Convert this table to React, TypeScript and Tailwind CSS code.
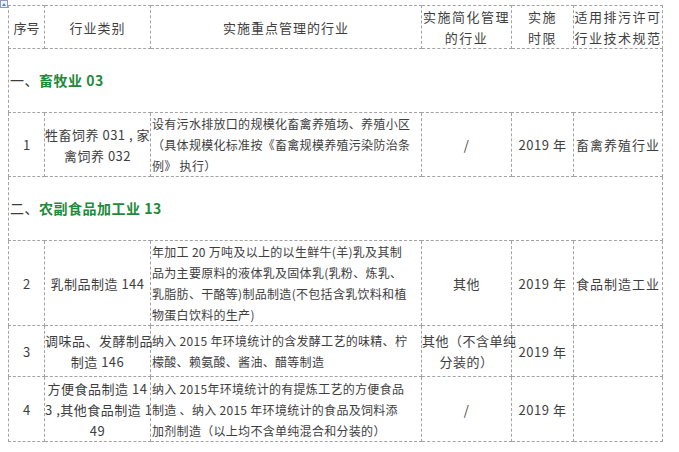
const cell = "border border-dashed border-[#a3a3a3] p-0 align-middle";

const Lines = ({ lines }: { lines: string[] }) => (
  <>
    {lines.map((l, i) => (
      <span key={i} className="block whitespace-nowrap">
        {l}
      </span>
    ))}
  </>
);

const Section = ({ num, title }: { num: string; title: string }) => (
  <tr className="h-[64px]">
    <td colSpan={6} className={`${cell} pl-[1px] text-[14px] tracking-[0.5px]`}>
      <span className="text-[#3e3e3e]">{num}</span>
      <span className="font-bold text-[#1f8a3b]">{title}</span>
    </td>
  </tr>
);

const rows = [
  {
    no: "1",
    cat: ["牲畜饲养 031 , 家", "禽饲养 032"],
    key: ["设有污水排放口的规模化畜禽养殖场、养殖小区", "（具体规模化标准按《畜禽规模养殖污染防治条", "例》 执行）"],
    simple: ["/"],
    year: "2019 年",
    spec: "畜禽养殖行业",
    h: "h-[64px]",
  },
  {
    no: "2",
    cat: ["乳制品制造 144"],
    key: ["年加工 20 万吨及以上的以生鲜牛(羊)乳及其制", "品为主要原料的液体乳及固体乳(乳粉、炼乳、", "乳脂肪、干酪等)制品制造(不包括含乳饮料和植", "物蛋白饮料的生产)"],
    simple: ["其他"],
    year: "2019 年",
    spec: "食品制造工业",
    h: "h-[85px]",
  },
  {
    no: "3",
    cat: ["调味品、发酵制品", "制造 146"],
    key: ["纳入 2015 年环境统计的含发酵工艺的味精、柠", "檬酸、赖氨酸、酱油、醋等制造"],
    simple: ["其他（不含单纯", "分装的）"],
    year: "2019 年",
    spec: "",
    h: "h-[51px]",
  },
  {
    no: "4",
    cat: ["方便食品制造 14", "3 ,其他食品制造 1", "49"],
    key: ["纳入 2015年环境统计的有提炼工艺的方便食品", "制造 、纳入 2015 年环境统计的食品及饲料添", "加剂制造（以上均不含单纯混合和分装的）"],
    simple: ["/"],
    year: "2019 年",
    spec: "",
    h: "h-[65px]",
  },
];

type Row = (typeof rows)[number];

const DataRow = ({ r }: { r: Row }) => (
  <tr className={r.h}>
    <td className={`${cell} text-center`}>{r.no}</td>
    <td className={`${cell} text-center tracking-[0.5px]`}>
      <Lines lines={r.cat} />
    </td>
    <td className={`${cell} pl-[1px] text-[12px] tracking-[0.3px]`}>
      <Lines lines={r.key} />
    </td>
    <td className={`${cell} text-center tracking-[0.5px]`}>
      <Lines lines={r.simple} />
    </td>
    <td className={`${cell} text-center tracking-[0.5px]`}>{r.year}</td>
    <td className={`${cell} pl-[2px] tracking-[1px]`}>{r.spec}</td>
  </tr>
);

export default function App() {
  return (
    <div className="relative w-[679px] h-[452px] bg-white pt-[5px] pl-[8px] font-['Noto_Sans_CJK_SC','Noto_Sans',sans-serif] text-[13px] leading-[21px] text-[#3e3e3e]">
      <svg className="absolute left-0 top-0" width="8" height="8" viewBox="0 0 8 8">
        <rect x="0.5" y="0.5" width="7" height="7" fill="#eef2fa" stroke="#8c9bb8" />
        <path d="M2 6 L4 3 L6 6 Z" fill="#5b7fc7" />
      </svg>
      <table className="table-fixed border-collapse w-[654px]">
        <colgroup>
          <col className="w-[36px]" />
          <col className="w-[106px]" />
          <col className="w-[271px]" />
          <col className="w-[90px]" />
          <col className="w-[62px]" />
          <col className="w-[89px]" />
        </colgroup>
        <tbody>
          <tr className="h-[43px]">
            <td className={`${cell} text-center`}>序号</td>
            <td className={`${cell} text-center tracking-[1px]`}>行业类别</td>
            <td className={`${cell} text-center tracking-[1px]`}>实施重点管理的行业</td>
            <td className={`${cell} text-center tracking-[1.5px]`}>
              <Lines lines={["实施简化管理", "的行业"]} />
            </td>
            <td className={`${cell} text-center tracking-[1.5px]`}>
              <Lines lines={["实施", "时限"]} />
            </td>
            <td className={`${cell} text-center tracking-[1.5px]`}>
              <Lines lines={["适用排污许可", "行业技术规范"]} />
            </td>
          </tr>
          <Section num="一、" title="畜牧业 03" />
          <DataRow r={rows[0]} />
          <Section num="二、" title="农副食品加工业 13" />
          {rows.slice(1).map((r) => (
            <DataRow key={r.no} r={r} />
          ))}
        </tbody>
      </table>
    </div>
  );
}
